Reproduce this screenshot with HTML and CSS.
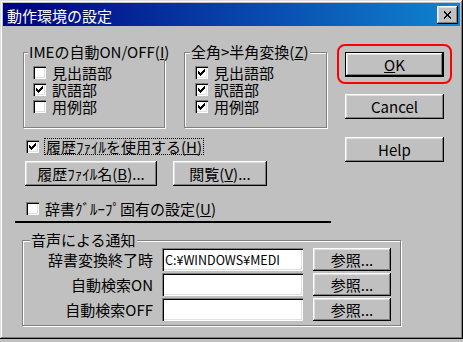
FILE: index.html
```html
<!DOCTYPE html>
<html lang="ja">
<head>
    <meta charset="UTF-8">
    <title>動作環境の設定</title>
    <link rel="stylesheet" href="styles.css">
</head>
<body>
    <div class="window">
        <div class="titlebar">
            <span class="title">動作環境の設定</span>
            <button class="close" type="button" aria-label="閉じる">
                <svg width="9" height="8" viewBox="0 0 9 8"><path d="M1 0.5L8 7.5M8 0.5L1 7.5" stroke="#000" stroke-width="2" shape-rendering="crispEdges"/></svg>
            </button>
        </div>

        <div class="client">
            <div class="top">
                <div class="left">
                    <div class="groups">
                        <div class="group g-ime">
                            <div class="group-title">IMEの自動ON/OFF(<u>I</u>)</div>
                            <div class="check"><span class="box"></span><span>見出語部</span></div>
                            <div class="check"><span class="box on"></span><span>訳語部</span></div>
                            <div class="check"><span class="box"></span><span>用例部</span></div>
                        </div>
                        <div class="group g-zen">
                            <div class="group-title">全角&gt;半角変換(<u>Z</u>)</div>
                            <div class="check"><span class="box on"></span><span>見出語部</span></div>
                            <div class="check"><span class="box on"></span><span>訳語部</span></div>
                            <div class="check"><span class="box on"></span><span>用例部</span></div>
                        </div>
                    </div>

                    <div class="check history"><span class="box on"></span><span class="focus">履歴ﾌｧｲﾙを使用する(<u>H</u>)</span></div>

                    <div class="btn-row">
                        <button class="btn w-hist" type="button">履歴ﾌｧｲﾙ名(<u>B</u>)...</button>
                        <button class="btn w-view" type="button">閲覧(<u>V</u>)...</button>
                    </div>

                    <div class="check dict"><span class="box"></span><span>辞書ｸﾞﾙｰﾌﾟ固有の設定(<u>U</u>)</span></div>

                    <div class="rule"></div>
                </div>

                <div class="right">
                    <div class="mark">
                        <button class="btn default" type="button"><u>O</u>K</button>
                    </div>
                    <button class="btn cancel" type="button">Cancel</button>
                    <button class="btn help" type="button">Help</button>
                </div>
            </div>

            <div class="group sound">
                <div class="group-title">音声による通知</div>
                <div class="rows">
                    <div class="row">
                        <span class="label">辞書変換終了時</span>
                        <input class="field" type="text" value="C:¥WINDOWS¥MEDI" readonly>
                        <button class="btn ref" type="button">参照...</button>
                    </div>
                    <div class="row">
                        <span class="label">自動検索ON</span>
                        <input class="field" type="text" value="" readonly>
                        <button class="btn ref" type="button">参照...</button>
                    </div>
                    <div class="row">
                        <span class="label">自動検索OFF</span>
                        <input class="field" type="text" value="" readonly>
                        <button class="btn ref" type="button">参照...</button>
                    </div>
                </div>
            </div>
        </div>
    </div>
</body>
</html>
```

FILE: styles.css
```css
html, body {
    margin: 0;
    background: #c0c0c0;
}
body {
    font-family: "Noto Sans CJK JP", "Noto Sans", sans-serif;
    font-size: 15px;
    color: #000;
    text-autospace: no-autospace;
}
.window {
    width: 463px;
    height: 339px;
    box-sizing: border-box;
    padding: 3px;
    background: #c0c0c0;
    box-shadow: inset -1px -1px #000, inset 1px 1px #dfdfdf, inset -2px -2px #808080, inset 2px 2px #fff;
}
.titlebar {
    height: 23px;
    display: flex;
    align-items: center;
    justify-content: space-between;
    padding: 0 2px 0 4px;
    background: linear-gradient(to right, #000080, #1084d0);
    color: #fff;
}
.title {
    line-height: 23px;
    padding-top: 1px;
}
.close {
    width: 21px;
    height: 18px;
    padding: 0;
    border: none;
    display: flex;
    align-items: center;
    justify-content: center;
    background: #c0c0c0;
    box-shadow: inset -1px -1px #000, inset 1px 1px #fff, inset -2px -2px #808080, inset 2px 2px #dfdfdf;
}
.client {
    padding-left: 12px;
}
.top {
    display: flex;
    align-items: flex-start;
}
.left {
    width: 316px;
}
.groups {
    display: flex;
    gap: 19px;
    margin: 26px 0 0 8px;
}
.group {
    box-sizing: border-box;
    border: 1px solid #808080;
    box-shadow: inset 1px 1px #fff, 1px 1px #fff;
}
.group-title {
    width: fit-content;
    margin: -9px 0 4px -5px;
    padding: 0 1px;
    line-height: 16px;
    white-space: nowrap;
    background: #c0c0c0;
}
.g-ime {
    width: 142px;
    padding: 0 0 12px 9px;
}
.g-zen {
    width: 143px;
    padding: 0 0 12px 10px;
}
.check {
    display: flex;
    align-items: center;
    gap: 6px;
    height: 17px;
    line-height: 17px;
    white-space: nowrap;
}
.box {
    flex: none;
    width: 13px;
    height: 13px;
    background: #fff;
    box-shadow: inset 1px 1px #808080, inset 2px 2px #000, inset -1px -1px #fff, inset -2px -2px #dfdfdf;
}
.box.on {
    background: #fff url("data:image/svg+xml,%3Csvg xmlns='http://www.w3.org/2000/svg' width='13' height='13'%3E%3Cpolygon points='3,5 5,7 10,2 10,5 5,10 3,8' fill='%23000' shape-rendering='crispEdges'/%3E%3C/svg%3E") no-repeat;
}
.history {
    gap: 5px;
    margin: 10px 0 0 11px;
}
.focus {
    border: 1px dotted #000;
    padding: 0 1px;
    line-height: 15px;
}
.btn {
    box-sizing: border-box;
    height: 25px;
    padding: 0;
    border: none;
    font: inherit;
    color: #000;
    background: #c0c0c0;
    box-shadow: inset -1px -1px #000, inset 1px 1px #fff, inset -2px -2px #808080, inset 2px 2px #dfdfdf;
}
.btn-row {
    display: flex;
    gap: 16px;
    margin: 6px 0 0 10px;
}
.w-hist {
    width: 132px;
}
.w-view {
    width: 94px;
}
.dict {
    margin: 14px 0 0 11px;
}
.rule {
    height: 2px;
    margin-top: 4px;
    background: #000;
}
.right {
    display: flex;
    flex-direction: column;
    align-items: center;
    margin: 18px 0 0 6px;
}
.right .btn {
    width: 99px;
}
.mark {
    border: 2px solid #f00;
    border-radius: 8px;
    padding: 6px 6px 5px;
}
.btn.default {
    border: 1px solid #000;
}
.cancel {
    margin-top: 10px;
}
.help {
    margin-top: 18px;
}
.sound {
    width: 379px;
    margin: 17px 0 0 7px;
    padding: 0 0 4px 0;
}
.sound .group-title {
    margin: -9px 0 0 7px;
}
.rows {
    display: flex;
    flex-direction: column;
    gap: 2px;
}
.row {
    display: flex;
    align-items: center;
    height: 23px;
}
.label {
    width: 130px;
    text-align: right;
    white-space: nowrap;
}
.field {
    box-sizing: border-box;
    width: 141px;
    height: 23px;
    margin: 0 0 0 9px;
    padding: 0 2px 0 3px;
    border: none;
    outline: none;
    font: 12.5px "Noto Sans CJK JP", "Noto Sans", sans-serif;
    color: #000;
    background: #fff;
    box-shadow: inset 1px 1px #808080, inset 2px 2px #000, inset -1px -1px #fff, inset -2px -2px #dfdfdf;
}
.btn.ref {
    width: 78px;
    height: 23px;
    margin-left: 10px;
}
```
